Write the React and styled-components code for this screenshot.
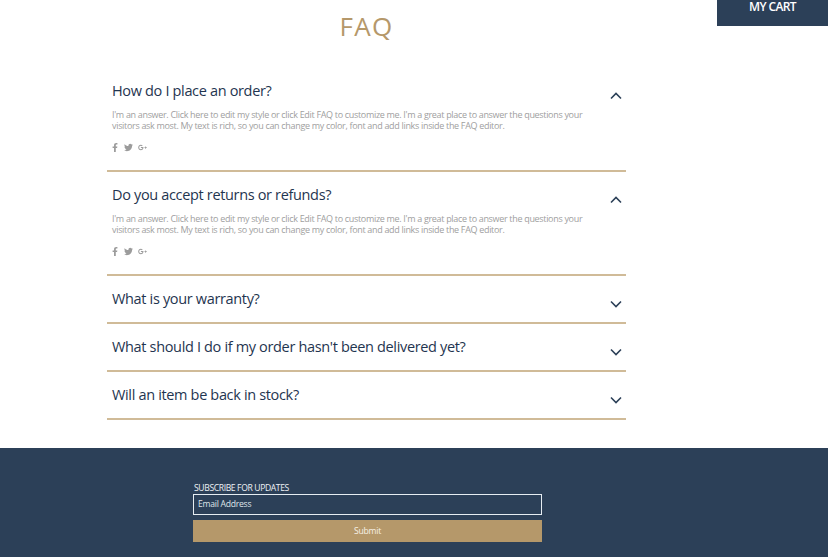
import React from "react";
import styled, { createGlobalStyle } from "styled-components";
import { FaFacebookF, FaTwitter, FaGooglePlusG } from "react-icons/fa";

const ANSWER =
  "I'm an answer. Click here to edit my style or click Edit FAQ to customize me. I'm a great place to answer the questions your visitors ask most. My text is rich, so you can change my color, font and add links inside the FAQ editor.";

const faqs = [
  { question: "How do I place an order?", open: true },
  { question: "Do you accept returns or refunds?", open: true },
  { question: "What is your warranty?", open: false },
  { question: "What should I do if my order hasn't been delivered yet?", open: false },
  { question: "Will an item be back in stock?", open: false },
];

const GlobalStyle = createGlobalStyle`
  html, body {
    margin: 0;
    padding: 0;
    background: #fff;
    overflow: hidden;
  }
  body {
    font-family: "Open Sans", "Liberation Sans", sans-serif;
  }
`;

const Page = styled.div`
  position: relative;
  width: 828px;
  height: 557px;
  display: flex;
  flex-direction: column;
`;

const CartButton = styled.div`
  position: absolute;
  top: 0;
  right: 0;
  width: 111px;
  height: 26px;
  background: #2c4058;
  color: #fff;
  font-size: 12px;
  font-weight: 600;
  letter-spacing: -0.6px;
  line-height: 13px;
  text-align: center;
`;

const Main = styled.main`
  height: 448px;
  width: 519px;
  margin-left: 107px;
  padding-top: 8px;
  box-sizing: border-box;
`;

const Title = styled.h1`
  margin: 0 0 24px;
  height: 36px;
  font-size: 26px;
  line-height: 36px;
  font-weight: 400;
  letter-spacing: 1.3px;
  color: #b5986a;
  text-align: center;
`;

const Item = styled.section`
  box-sizing: border-box;
  border-bottom: 2px solid #d0bb98;
  height: ${(p) => (p.$open ? 104 : 48)}px;
  padding: 7px 0 0 5px;
`;

const QuestionRow = styled.div`
  display: flex;
  align-items: flex-start;
  justify-content: space-between;
  padding-right: 4px;
  height: 32px;
`;

const Question = styled.h3`
  margin: 0;
  font-size: 14.5px;
  letter-spacing: -0.34px;
  line-height: 32px;
  font-weight: 400;
  color: #1f3550;
`;

const Chevron = styled.svg`
  width: 12px;
  height: 8px;
  margin-top: 17px;
  fill: none;
  stroke: #2c4058;
  stroke-width: 1.6;
`;

const Answer = styled.p`
  margin: 2px 0 0;
  width: 480px;
  font-size: 9px;
  letter-spacing: -0.32px;
  line-height: 11.2px;
  color: #a0a0a0;
`;

const Socials = styled.div`
  display: flex;
  align-items: center;
  gap: 5.5px;
  margin-top: 11px;
  color: #9c9c9c;
  font-size: 9px;
  height: 10px;

  svg:first-child {
    width: 6px;
  }
`;

const Footer = styled.footer`
  flex: 1;
  background: #2c4058;
  padding: 35px 0 0 193px;
`;

const Form = styled.form`
  width: 349px;
  display: flex;
  flex-direction: column;
`;

const Label = styled.label`
  font-size: 8.6px;
  letter-spacing: -0.38px;
  line-height: 11px;
  color: #eef2f5;
  padding-left: 1px;
`;

const EmailBox = styled.div`
  height: 21px;
  box-sizing: border-box;
  border: 1.5px solid #e6edf2;
  padding-left: 4px;
  font-size: 8.6px;
  letter-spacing: -0.25px;
  line-height: 18px;
  color: #dfe5ea;
  margin-bottom: 5px;
`;

const Submit = styled.div`
  height: 22px;
  background: #b5986a;
  color: #f7f1e6;
  font-size: 8.6px;
  letter-spacing: -0.2px;
  line-height: 22px;
  text-align: center;
`;

const FaqItem = ({ question, open }) => (
  <Item $open={open}>
    <QuestionRow>
      <Question>{question}</Question>
      <Chevron viewBox="0 0 12 8">
        <path d={open ? "M1 6.5 L6 1.5 L11 6.5" : "M1 1.5 L6 6.5 L11 1.5"} />
      </Chevron>
    </QuestionRow>
    {open && (
      <>
        <Answer>{ANSWER}</Answer>
        <Socials>
          <FaFacebookF />
          <FaTwitter />
          <FaGooglePlusG />
        </Socials>
      </>
    )}
  </Item>
);

export default function App() {
  return (
    <Page>
      <GlobalStyle />
      <CartButton>MY CART</CartButton>
      <Main>
        <Title>FAQ</Title>
        {faqs.map((f) => (
          <FaqItem key={f.question} question={f.question} open={f.open} />
        ))}
      </Main>
      <Footer>
        <Form>
          <Label>SUBSCRIBE FOR UPDATES</Label>
          <EmailBox>Email Address</EmailBox>
          <Submit>Submit</Submit>
        </Form>
      </Footer>
    </Page>
  );
}
